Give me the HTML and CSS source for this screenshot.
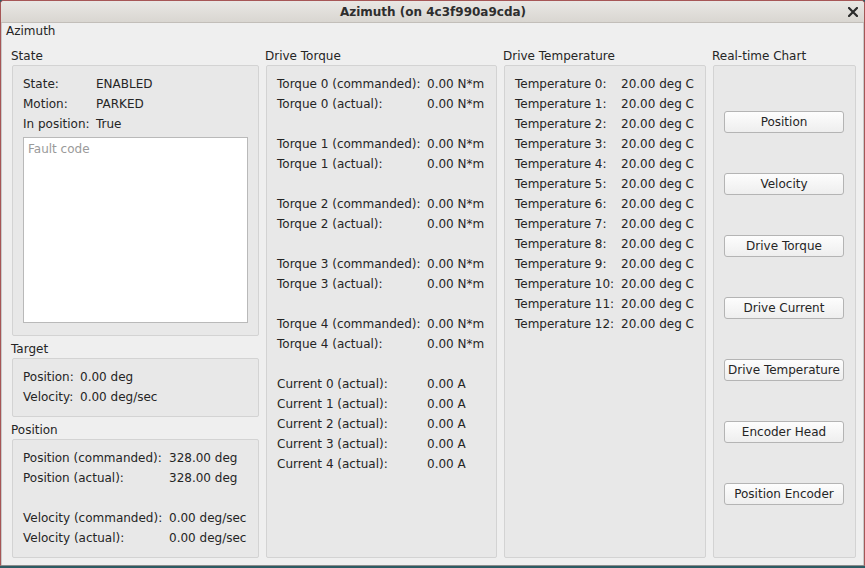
FILE: index.html
```html
<!DOCTYPE html>
<html>
<head>
<meta charset="utf-8">
<link rel="stylesheet" href="styles.css">
</head>
<body>
<div class="window">
  <div class="titlebar">
    <span class="title">Azimuth (on 4c3f990a9cda)</span>
    <svg class="close" width="10" height="10" viewBox="0 0 10 10"><path d="M1 1 L9 9 M9 1 L1 9" stroke="#2b2b2b" stroke-width="2.2" stroke-linecap="square"/></svg>
  </div>
  <div class="content">
    <div class="app-title">Azimuth</div>
    <div class="columns">
      <div class="col col-left">
        <div class="group">
          <div class="gtitle">State</div>
          <div class="box state-box">
            <div class="form f-state">
              <span>State:</span><span>ENABLED</span>
              <span>Motion:</span><span>PARKED</span>
              <span>In position:</span><span>True</span>
            </div>
            <div class="fault">Fault code</div>
          </div>
        </div>
        <div class="group gap-top">
          <div class="gtitle">Target</div>
          <div class="box small-box">
            <div class="form f-target">
              <span>Position:</span><span>0.00 deg</span>
              <span>Velocity:</span><span>0.00 deg/sec</span>
            </div>
          </div>
        </div>
        <div class="group gap-top">
          <div class="gtitle">Position</div>
          <div class="box small-box">
            <div class="form f-pos">
              <span>Position (commanded):</span><span>328.00 deg</span>
              <span>Position (actual):</span><span>328.00 deg</span>
              <span class="blank"></span><span class="blank"></span>
              <span>Velocity (commanded):</span><span>0.00 deg/sec</span>
              <span>Velocity (actual):</span><span>0.00 deg/sec</span>
            </div>
          </div>
        </div>
      </div>

      <div class="col group">
        <div class="gtitle">Drive Torque</div>
        <div class="box grow">
          <div class="form f-torque">
            <span>Torque 0 (commanded):</span><span>0.00 N*m</span>
            <span>Torque 0 (actual):</span><span>0.00 N*m</span>
            <span class="blank"></span><span class="blank"></span>
            <span>Torque 1 (commanded):</span><span>0.00 N*m</span>
            <span>Torque 1 (actual):</span><span>0.00 N*m</span>
            <span class="blank"></span><span class="blank"></span>
            <span>Torque 2 (commanded):</span><span>0.00 N*m</span>
            <span>Torque 2 (actual):</span><span>0.00 N*m</span>
            <span class="blank"></span><span class="blank"></span>
            <span>Torque 3 (commanded):</span><span>0.00 N*m</span>
            <span>Torque 3 (actual):</span><span>0.00 N*m</span>
            <span class="blank"></span><span class="blank"></span>
            <span>Torque 4 (commanded):</span><span>0.00 N*m</span>
            <span>Torque 4 (actual):</span><span>0.00 N*m</span>
            <span class="blank"></span><span class="blank"></span>
            <span>Current 0 (actual):</span><span>0.00 A</span>
            <span>Current 1 (actual):</span><span>0.00 A</span>
            <span>Current 2 (actual):</span><span>0.00 A</span>
            <span>Current 3 (actual):</span><span>0.00 A</span>
            <span>Current 4 (actual):</span><span>0.00 A</span>
          </div>
        </div>
      </div>

      <div class="col group">
        <div class="gtitle">Drive Temperature</div>
        <div class="box grow">
          <div class="form f-temp">
            <span>Temperature 0:</span><span>20.00 deg C</span>
            <span>Temperature 1:</span><span>20.00 deg C</span>
            <span>Temperature 2:</span><span>20.00 deg C</span>
            <span>Temperature 3:</span><span>20.00 deg C</span>
            <span>Temperature 4:</span><span>20.00 deg C</span>
            <span>Temperature 5:</span><span>20.00 deg C</span>
            <span>Temperature 6:</span><span>20.00 deg C</span>
            <span>Temperature 7:</span><span>20.00 deg C</span>
            <span>Temperature 8:</span><span>20.00 deg C</span>
            <span>Temperature 9:</span><span>20.00 deg C</span>
            <span>Temperature 10:</span><span>20.00 deg C</span>
            <span>Temperature 11:</span><span>20.00 deg C</span>
            <span>Temperature 12:</span><span>20.00 deg C</span>
          </div>
        </div>
      </div>

      <div class="col group">
        <div class="gtitle">Real-time Chart</div>
        <div class="box grow buttons">
          <button class="btn">Position</button>
          <button class="btn">Velocity</button>
          <button class="btn">Drive Torque</button>
          <button class="btn">Drive Current</button>
          <button class="btn">Drive Temperature</button>
          <button class="btn">Encoder Head</button>
          <button class="btn">Position Encoder</button>
        </div>
      </div>
    </div>
  </div>
</div>
</body>
</html>
```

FILE: styles.css
```css
html, body {
  margin: 0;
  padding: 0;
  background: #2d5b63;
}
body {
  width: 865px;
  height: 568px;
  overflow: hidden;
  font-family: "DejaVu Sans", sans-serif;
  font-size: 12px;
  color: #252525;
}
.window {
  box-sizing: border-box;
  width: 865px;
  height: 566px;
  border: 1px solid #a65656;
  border-bottom: 1px solid #8c8c8c;
  border-radius: 4px 4px 0 0;
  background: #efefef;
  display: flex;
  flex-direction: column;
  overflow: hidden;
}
.titlebar {
  position: relative;
  height: 21px;
  flex: none;
  background: linear-gradient(#e9e7e4, #d9d6d1);
  border-bottom: 1px solid #c2beb9;
  display: flex;
  align-items: center;
  justify-content: center;
}
.title {
  font-weight: bold;
  font-size: 12px;
  color: #2e2e2e;
  line-height: 14px;
  margin-left: 1px;
}
.close {
  position: absolute;
  right: 6px;
  top: 6px;
}
.content {
  flex: 1;
  display: flex;
  flex-direction: column;
  padding: 1px 0 7px 4px;
  border-left: 1px solid #c9c9c9;
  border-right: 1px solid #c9c9c9;
  min-height: 0;
}
.app-title {
  line-height: 14px;
  height: 14px;
}
.columns {
  flex: 1;
  margin-top: 11px;
  margin-left: 5px;
  display: grid;
  grid-template-columns: 248px 232px 203px 144px;
  column-gap: 6px;
  min-height: 0;
}
.col {
  display: flex;
  flex-direction: column;
  min-height: 0;
}
.group {
  display: flex;
  flex-direction: column;
}
.gap-top {
  margin-top: 6px;
}
.gtitle {
  line-height: 14px;
  height: 14px;
  margin-bottom: 2px;
  white-space: nowrap;
}
.box {
  margin-left: 1px;
  border: 1px solid #d3d3d3;
  border-radius: 2px;
  background: #e8e8e8;
  padding: 8px 8px 8px 10px;
}
.small-box {
  padding-bottom: 9px;
}
.grow {
  flex: 1;
}
.state-box {
  padding-bottom: 12px;
}
.form {
  display: grid;
  grid-auto-rows: 20px;
  line-height: 20px;
  white-space: nowrap;
}
.f-state { grid-template-columns: 73px auto; }
.f-target { grid-template-columns: 57px auto; }
.f-pos { grid-template-columns: 146px auto; }
.f-torque { grid-template-columns: 150px auto; }
.f-temp { grid-template-columns: 106px auto; }
.fault {
  margin-top: 3px;
  margin-right: 2px;
  background: #ffffff;
  border: 1px solid #b9b9b9;
  color: #9a9a9a;
  padding: 4px 4px 3px 4px;
  line-height: 14px;
  box-sizing: content-box;
  height: 177px;
}
.buttons {
  display: flex;
  flex-direction: column;
  padding: 45px 0 0 10px;
  gap: 40px;
}
.btn {
  width: 120px;
  height: 22px;
  padding: 0;
  font-family: "DejaVu Sans", sans-serif;
  font-size: 12px;
  color: #252525;
  background: linear-gradient(#fdfdfd, #eeeeee);
  border: 1px solid #b4b4b4;
  border-radius: 3px;
  white-space: nowrap;
  line-height: 20px;
}
```
